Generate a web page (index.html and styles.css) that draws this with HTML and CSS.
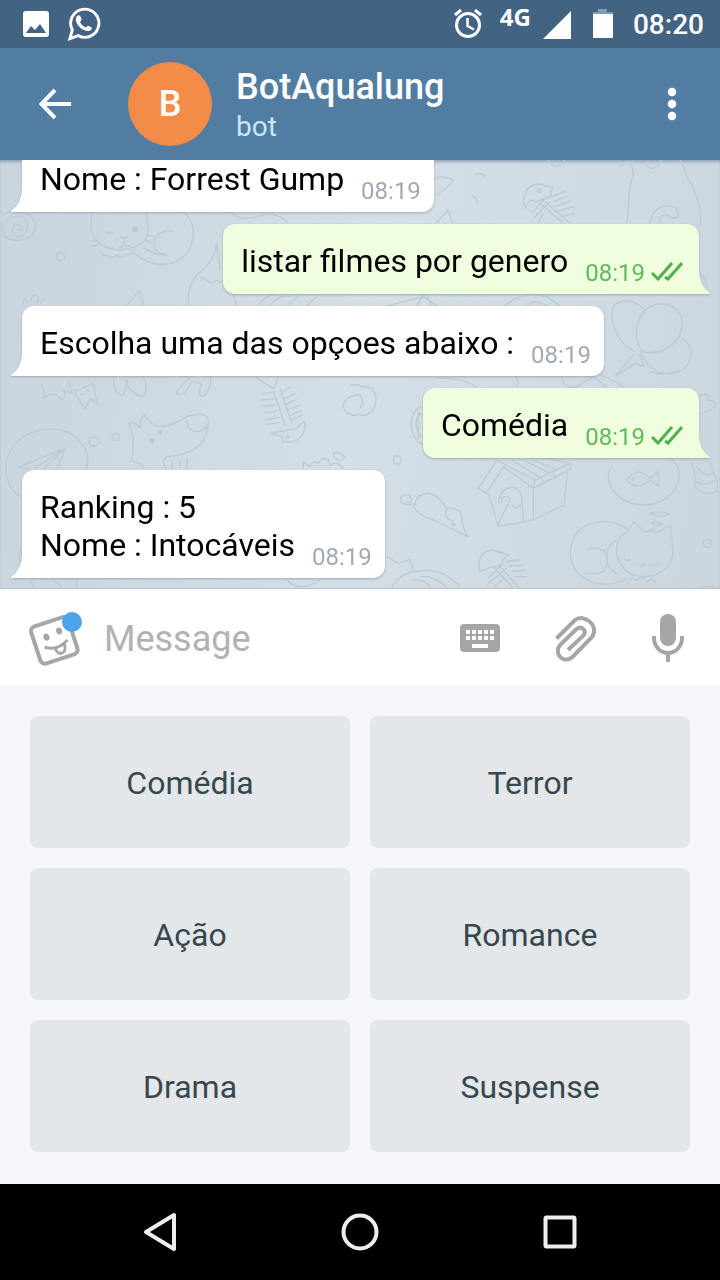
FILE: index.html
```html
<!DOCTYPE html>
<html lang="pt">
<head>
<meta charset="utf-8">
<meta name="viewport" content="width=device-width, initial-scale=1">
<title>BotAqualung</title>
<link rel="stylesheet" href="styles.css">
</head>
<body>
<div class="screen">
  <div class="status">
    <div class="status-left">
      <svg width="26" height="26" viewBox="0 0 26 26"><path fill="#fff" fill-rule="evenodd" d="M3 0H23Q26 0 26 3V23Q26 26 23 26H3Q0 26 0 23V3Q0 0 3 0ZM3 22H23L17 13L12 19L8 15Z"/></svg>
      <svg width="34" height="36" viewBox="0 0 35 36"><path fill="none" stroke="#fff" stroke-width="3" d="M3 33L5.500 24A14.500 14.500 0 1 1 11.500 30Z"/><path fill="#fff" d="M10 10C11 8.500 13 8.500 13.800 10L15 13.200C15.300 14.500 13.500 15 13.500 16C14.500 18.500 16.500 20.500 19.500 21.500C20.500 21.500 21 19.500 22.200 20L25.500 21.700C26 23.500 24.500 25 22.500 25.300C19 25.600 15 23.500 12.500 20.500C9.500 17 8 13.500 10 10Z"/></svg>
    </div>
    <div class="status-right">
      <svg width="28" height="30" viewBox="0 0 28 30"><g fill="none" stroke="#fff" stroke-width="3"><circle cx="14" cy="16" r="11.500"/><path d="M1 6L7 1M27 6L21 1"/><path stroke-width="2.500" d="M13.500 9V17L20 20.500"/></g></svg>
      <span class="network">4G</span>
      <svg class="signal" width="28" height="28" viewBox="0 0 28 28"><path fill="#fff" d="M28 0V28H0Z"/></svg>
      <svg class="battery" width="20" height="30" viewBox="0 0 20 30"><path fill="#8299b1" d="M5 0H14V3H20V6H0V3H5Z"/><path fill="#fff" d="M0 5H20V29H0Z"/></svg>
      <span class="clock">08:20</span>
    </div>
  </div>

  <header class="header">
    <button class="back" aria-label="Back"><svg width="32" height="32" viewBox="0 0 32 32"><path fill="none" stroke="#fff" stroke-width="4" d="M32 16H3M16 2L2.500 16L16 30"/></svg></button>
    <div class="avatar">B</div>
    <div class="peer">
      <h1 class="peer-name">BotAqualung</h1>
      <p class="peer-status">bot</p>
    </div>
    <button class="more" aria-label="More options"><svg width="10" height="34" viewBox="0 0 10 34"><g fill="#fff"><circle cx="5" cy="5" r="4.300"/><circle cx="5" cy="17" r="4.300"/><circle cx="5" cy="29" r="4.300"/></g></svg></button>
  </header>

  <main class="chat">
    <svg class="wallpaper" viewBox="0 0 720 429" preserveAspectRatio="xMidYMax slice" aria-hidden="true">
      <g transform="scale(.33333)">
        <path d="M10 165C30 145 90 150 108 190C118 235 40 260 12 225C-5 190 30 165 60 170C100 180 85 235 50 230C25 215 40 185 65 198C70 210 60 215 52 208"/>
        <circle cx="182" cy="290" r="12"/>
        <path d="M280 150C265 200 275 245 320 262C350 275 420 270 437 235C450 210 445 170 435 155M315 213Q330 225 342 215M360 232H385M372 235V255M355 262Q365 265 372 252Q380 262 392 258M305 270Q300 290 320 285Q335 300 350 285Q365 300 380 283Q405 285 400 268M268 240L288 245M272 258L292 255M440 225L460 230M435 240L455 248M400 275C440 320 520 330 560 280C595 230 580 170 545 155M520 215C490 205 460 225 462 255C465 275 480 285 500 280M430 262Q470 290 505 286"/>
        <circle cx="406" cy="208" r="7" class="dot"/>
        <path d="M690 155Q720 185 770 170Q830 150 865 190M660 330L650 250C645 300 610 330 590 345C565 380 560 410 568 440M600 350L635 370L650 360L670 370M700 400L710 440M380 437L418 392L432 437M65 440L75 415L90 430M95 425Q90 405 108 405Q122 415 110 428M125 430Q120 415 135 418M775 437Q800 400 830 405M810 437Q840 400 870 410M860 437L900 405M920 437L950 410"/>
      </g>
      <g transform="translate(360 0) scale(.33333)">
        <path d="M225 55Q250 45 280 60Q260 90 225 105M345 45Q365 35 375 50M335 108Q355 115 350 130M228 190L265 150L278 190M565 0Q590 40 615 0M495 145C485 110 495 75 535 72L578 82L570 110L530 125L510 120ZM515 160L560 110M520 175L570 125M535 188L550 160M570 110L615 95M580 125L625 108M582 140L635 122M590 155L640 140M600 170L645 160M540 130L610 190M555 125L630 190M780 20Q815 -20 820 45C800 90 810 140 800 190M860 15Q880 40 905 0M970 30C1000 80 1030 140 1020 200M975 30L960 0M870 190C880 120 960 125 955 170Q935 180 925 165Q895 160 900 190M1020 340Q1050 370 1035 405"/>
        <circle cx="538" cy="92" r="5"/>
        <path d="M825 575C770 550 740 470 765 435C800 405 860 440 855 460M845 575C810 510 840 430 905 432C985 435 985 530 920 565Q880 585 845 575ZM965 535C1010 560 1000 630 940 640Q880 650 845 585M822 582L765 650L825 610L850 620L840 580M85 437L190 410L230 437M170 437L195 400L215 437M435 437Q490 390 560 410L600 437M500 437Q525 415 560 437"/>
      </g>
      <g transform="translate(0 210) scale(.33333)">
        <path d="M120 40Q140 65 130 85Q160 60 185 90Q205 80 190 60L215 70L205 30M222 65L280 40L292 105L270 85L255 118ZM240 70L250 75M260 60L270 65M340 25Q345 80 370 75Q390 20 375 30Q400 80 430 78Q450 50 425 15M580 15Q525 60 530 72Q555 80 575 35L605 40Q590 80 610 78Q635 60 632 15M770 25L820 55L835 20M820 60L855 165M840 55L875 160M785 70L820 68M785 90L822 86M790 110L828 104M792 130L832 122M795 150L838 142M795 163L842 157M845 70L870 50M850 88L885 70M855 105L890 88M860 120L900 105M868 138L905 120M875 150L908 135M812 190L890 175Q910 155 914 155C920 200 890 220 850 215L845 200ZM1078 75C1050 75 1030 90 1030 110C1040 140 1070 140 1080 130M1050 45H1080"/>
        <circle cx="862" cy="200" r="4"/>
        <path d="M395 275L400 210L388 160Q400 150 420 175Q420 145 432 135L460 165Q500 180 560 140C600 130 630 125 625 165C620 220 580 255 500 260C480 275 495 290 500 298M400 275Q430 280 432 298M560 148C560 200 620 190 625 160M515 270V298M540 268V290M562 265V298"/>
        <circle cx="480" cy="188" r="5" class="dot"/><circle cx="455" cy="212" r="6" class="dot"/>
        <circle cx="282" cy="215" r="14"/><circle cx="347" cy="201" r="11"/>
        <path d="M62 380C20 360 5 290 30 245C70 170 170 165 220 195C265 230 270 265 258 298M55 292L195 235L172 298M55 292L85 297M100 298L195 235L130 298M62 535Q50 560 65 580M910 298V275L930 290Q935 270 955 280Q965 260 985 268L990 285Q1015 270 1030 298M1000 250Q1015 240 1035 262Q1020 280 1005 262ZM90 630L105 655M160 630L190 655M230 630V655M860 630Q900 670 960 630"/>
      </g>
      <g transform="translate(360 210) scale(.33333)">
        <path d="M0 50Q50 45 48 95Q40 140 0 135M0 75Q15 95 0 115M225 25Q300 20 350 50M460 15Q480 30 470 50M605 15Q610 60 650 50L700 20L740 50M720 15Q760 30 790 50M865 5Q910 20 960 0M185 110C145 120 140 200 190 225M185 130C160 140 165 190 190 205M175 120V210M1022 75Q1050 65 1045 90Q1075 95 1065 110L1025 132M1010 90L1022 75"/>
        <circle cx="112" cy="270" r="12"/>
        <path d="M160 400C120 420 105 370 145 375C165 385 150 405 140 395M160 400Q160 430 220 450L322 500L305 455Q310 410 260 415Q220 350 175 380Q160 395 170 410M260 415Q250 445 280 455"/>
        <circle cx="280" cy="463" r="4" class="dot"/>
        <path d="M410 270L355 355L380 370L430 290L520 355L630 300V280L560 265M410 270L525 330L630 280M520 355L525 330M385 370L415 470L520 450V355M520 450L612 405L622 305M415 400C420 340 480 340 485 380L490 455M425 400C420 380 445 370 452 390Q435 420 430 430L415 465M455 405L470 415L482 405M455 270L540 322M490 270L570 310M520 270L590 300M545 325L550 340L565 330M580 310L585 325L610 305"/>
        <path d="M755 285C725 340 770 400 850 405C930 405 970 340 955 295Q945 275 930 265M800 330Q835 285 870 325L895 305V347L870 330Q830 365 800 330ZM995 275Q1010 320 1005 350Q1030 380 1070 365Q1080 330 1055 300Q1060 290 1050 275M1010 290Q1040 325 1060 310M1005 335Q1040 350 1065 330"/>
        <circle cx="820" cy="327" r="4"/>
        <path d="M805 480C750 435 655 450 635 520C615 600 680 645 740 643Q780 640 800 625M680 540Q700 530 730 540Q755 570 730 605Q700 615 675 610M805 480L820 455L855 485H895L932 465L938 540C940 600 890 620 850 620C800 620 765 580 770 530Q775 500 805 480M770 510Q735 530 742 575Q745 600 770 610M790 565Q800 575 812 567M865 582Q880 590 895 582M835 580L848 590L855 578M800 640Q810 620 830 630Q850 615 860 635Q880 620 885 640M870 430Q900 420 928 432Q905 445 870 430ZM875 458Q890 452 905 462Q890 472 875 458M865 480L885 478"/>
        <circle cx="1042" cy="520" r="12"/>
        <path d="M360 605C350 570 365 540 400 540L445 555Q420 575 420 590L395 590ZM385 625L430 580M380 645L440 595M400 655L430 625M400 590L460 655M415 585L480 655M440 575L480 570M445 590L490 585M455 605L495 600M465 620L500 620M80 560L115 580L150 568L162 605Q240 585 300 650M95 650Q130 600 180 605M180 620Q230 615 260 655M160 630Q190 625 215 655M1020 655Q1040 640 1070 655"/>
      </g>
    </svg>

    <div class="message incoming">
      <p class="text">Nome : Forrest Gump</p>
      <time class="time">08:19</time>
      <svg class="tail" width="26" height="30" viewBox="0 0 26 30"><path d="M11 0V6Q11 22 0 29V30H26L11 0Z"/></svg>
    </div>
    <div class="message outgoing">
      <p class="text">listar filmes por genero</p>
      <time class="time">08:19</time>
      <svg class="checks" width="32" height="20" viewBox="0 0 32 20"><path d="M1 11L7 17L21 1M14 15L17 17L31 1"/></svg>
      <svg class="tail" width="26" height="30" viewBox="0 0 26 30"><path d="M15 0V6Q15 22 26 29V30H0L15 0Z"/></svg>
    </div>
    <div class="message incoming">
      <p class="text">Escolha uma das opçoes abaixo :</p>
      <time class="time">08:19</time>
      <svg class="tail" width="26" height="30" viewBox="0 0 26 30"><path d="M11 0V6Q11 22 0 29V30H26L11 0Z"/></svg>
    </div>
    <div class="message outgoing">
      <p class="text">Comédia</p>
      <time class="time">08:19</time>
      <svg class="checks" width="32" height="20" viewBox="0 0 32 20"><path d="M1 11L7 17L21 1M14 15L17 17L31 1"/></svg>
      <svg class="tail" width="26" height="30" viewBox="0 0 26 30"><path d="M15 0V6Q15 22 26 29V30H0L15 0Z"/></svg>
    </div>
    <div class="message incoming">
      <p class="text">Ranking : 5<br>Nome : Intocáveis</p>
      <time class="time">08:19</time>
      <svg class="tail" width="26" height="30" viewBox="0 0 26 30"><path d="M11 0V6Q11 22 0 29V30H26L11 0Z"/></svg>
    </div>
  </main>

  <form class="composer">
    <button type="button" class="sticker" aria-label="Stickers">
      <svg width="56" height="56" viewBox="0 0 56 56"><g transform="rotate(-18 28 31)" fill="none" stroke="#a6a6a6" stroke-width="4"><rect x="9" y="11" width="39" height="39" rx="5"/><path stroke-width="3" d="M17 34Q29 42 41 34M27 38C26 47 37 48 37 37"/><g fill="#a6a6a6" stroke="none"><ellipse cx="22" cy="25" rx="3" ry="3.500"/><ellipse cx="36" cy="23" rx="3" ry="3.500"/></g></g><circle cx="46" cy="12" r="10" fill="#4aa3eb"/></svg>
    </button>
    <input class="field" type="text" placeholder="Message" aria-label="Message">
    <button type="button" class="tool" aria-label="Keyboard">
      <svg width="48" height="48" viewBox="0 0 48 48"><rect x="4" y="10" width="40" height="28" rx="4" fill="#a6a6a6"/><path fill="#fff" d="M10 16h4v4h-4zM16 16h4v4h-4zM22 16h4v4h-4zM28 16h4v4h-4zM34 16h4v4h-4zM10 22h4v4h-4zM16 22h4v4h-4zM22 22h4v4h-4zM28 22h4v4h-4zM34 22h4v4h-4zM16 30h16v4H16z"/></svg>
    </button>
    <button type="button" class="tool" aria-label="Attach">
      <svg width="48" height="48" viewBox="0 0 48 48"><path fill="none" stroke="#a6a6a6" stroke-width="4" d="M6.500 24.500L24.500 6.500C34 -1.500 50 12 42 23L23 42.500C14 51 3 40 10 31L26.500 15C32 11 37 17 33.500 21.500L18 36"/></svg>
    </button>
    <button type="button" class="tool" aria-label="Record voice">
      <svg width="48" height="48" viewBox="0 0 48 48"><rect x="16" y="0" width="16" height="32" rx="8" fill="#a6a6a6"/><path fill="none" stroke="#a6a6a6" stroke-width="4" d="M10 22V24A14 15 0 0 0 38 24V22M24 38V48"/></svg>
    </button>
  </form>

  <div class="keyboard">
    <button class="option">Comédia</button>
    <button class="option">Terror</button>
    <button class="option">Ação</button>
    <button class="option">Romance</button>
    <button class="option">Drama</button>
    <button class="option">Suspense</button>
  </div>

  <nav class="navbar">
    <button class="nav-button" aria-label="Back"><svg width="40" height="40" viewBox="0 0 40 40"><path d="M6 20L34 3V37Z"/></svg></button>
    <button class="nav-button" aria-label="Home"><svg width="40" height="40" viewBox="0 0 40 40"><circle cx="20" cy="20" r="16.500"/></svg></button>
    <button class="nav-button" aria-label="Recent apps"><svg width="40" height="40" viewBox="0 0 40 40"><rect x="5.500" y="5.500" width="29" height="29" rx="1"/></svg></button>
  </nav>
</div>
</body>
</html>
```
FILE: styles.css
```css
* {
  box-sizing: border-box;
}

body {
  margin: 0;
  font-family: Roboto, "Noto Sans", sans-serif;
}

h1,
p {
  margin: 0;
}

button {
  padding: 0;
  border: 0;
  background: none;
  font: inherit;
}

svg {
  display: block;
  flex: none;
}

.screen {
  display: flex;
  flex-direction: column;
  height: 100vh;
}

.status {
  display: flex;
  flex: none;
  justify-content: space-between;
  height: 48px;
  padding: 0 16px 0 23px;
  background: #426382;
  color: #fff;
}

.status-left,
.status-right {
  display: flex;
  align-items: center;
}

.status-left {
  gap: 18px;
}

.network {
  align-self: flex-start;
  margin: 0 12px 0 18px;
  font: 700 24px/34px "Open Sans", sans-serif;
}

.signal {
  margin-top: 2px;
}

.battery {
  margin: 0 20px 0 22px;
}

.clock {
  padding-top: 2px;
  font-size: 28px;
  font-weight: 500;
  line-height: 48px;
}

.header {
  display: flex;
  flex: none;
  align-items: center;
  height: 112px;
  padding-right: 24px;
  background: #517da2;
  color: #fff;
}

.back {
  display: grid;
  place-items: center;
  width: 110px;
  height: 112px;
}

.avatar {
  width: 84px;
  margin: 0 24px 0 18px;
  border-radius: 50%;
  background: #f28c48;
  font-size: 36px;
  font-weight: 500;
  line-height: 84px;
  text-align: center;
}

.peer {
  flex: 1;
  padding-top: 2px;
}

.peer-name {
  font-size: 36px;
  font-weight: 500;
  line-height: 44px;
}

.peer-status {
  color: #cae6fc;
  font-size: 28px;
  line-height: 36px;
}

.more {
  display: grid;
  place-items: center;
  width: 48px;
  height: 112px;
}

.chat {
  position: relative;
  display: flex;
  flex: 1;
  flex-direction: column;
  align-items: flex-start;
  justify-content: flex-end;
  gap: 12px;
  min-height: 0;
  padding: 0 21px 11px 22px;
  overflow: hidden;
  background: linear-gradient(100deg, #c9d4de, #d4dee6 50%, #cbd6df);
  box-shadow: inset 0 3px 3px -1px #8fa5b9, inset 0 -2px 1px -1px #b4c1cb;
}

.wallpaper {
  position: absolute;
  inset: 0;
  width: 100%;
  height: 100%;
  fill: none;
  stroke: #becad3;
  stroke-width: 4;
  stroke-linejoin: round;
}

.wallpaper .dot {
  fill: #becad3;
}

.message {
  position: relative;
  display: flex;
  flex: none;
  align-items: flex-end;
  padding: 18px 13px 8px 18px;
  border-radius: 12px;
  background: #fff;
  filter: drop-shadow(0 1px 1px #9aa9b6);
}

.outgoing {
  align-self: flex-end;
  padding-right: 16px;
  background: #effedd;
}

.text {
  padding-bottom: 6px;
  color: #000;
  font-size: 32px;
  line-height: 38px;
}

.time {
  margin-left: 17px;
  color: #a1aab3;
  font-size: 24px;
  line-height: 26px;
}

.outgoing .time {
  color: #62b95c;
}

.checks {
  margin: 0 0 4px 6px;
  fill: none;
  stroke: #4fb04f;
  stroke-width: 3;
}

.tail {
  position: absolute;
  bottom: 0;
  left: -11px;
  fill: #fff;
}

.outgoing .tail {
  right: -11px;
  left: auto;
  fill: #effedd;
}

.composer {
  display: flex;
  flex: none;
  align-items: center;
  height: 97px;
  padding: 0 5px 0 26px;
  background: #fff;
}

.field {
  flex: 1;
  min-width: 0;
  margin-left: 22px;
  padding: 2px 0 0;
  border: 0;
  outline: 0;
  background: none;
  font: 36px/44px Roboto, "Noto Sans", sans-serif;
}

.field::placeholder {
  color: #b2b2b2;
  opacity: 1;
}

.tool {
  display: grid;
  place-items: center;
  width: 94px;
  height: 97px;
}

.keyboard {
  display: grid;
  flex: none;
  grid-template-columns: repeat(2, 1fr);
  gap: 20px;
  padding: 30px 30px 32px;
  background: #f5f6f9;
}

.option {
  height: 132px;
  padding-top: 2px;
  border-radius: 8px;
  background: #e4e7e9;
  color: #36474f;
  font-size: 32px;
}

.navbar {
  display: grid;
  flex: none;
  grid-template-columns: repeat(3, 1fr);
  height: 96px;
  padding: 0 60px;
  background: #000;
}

.nav-button {
  display: grid;
  place-items: center;
  fill: none;
  stroke: #eee;
  stroke-width: 4;
  stroke-linejoin: round;
}
```
